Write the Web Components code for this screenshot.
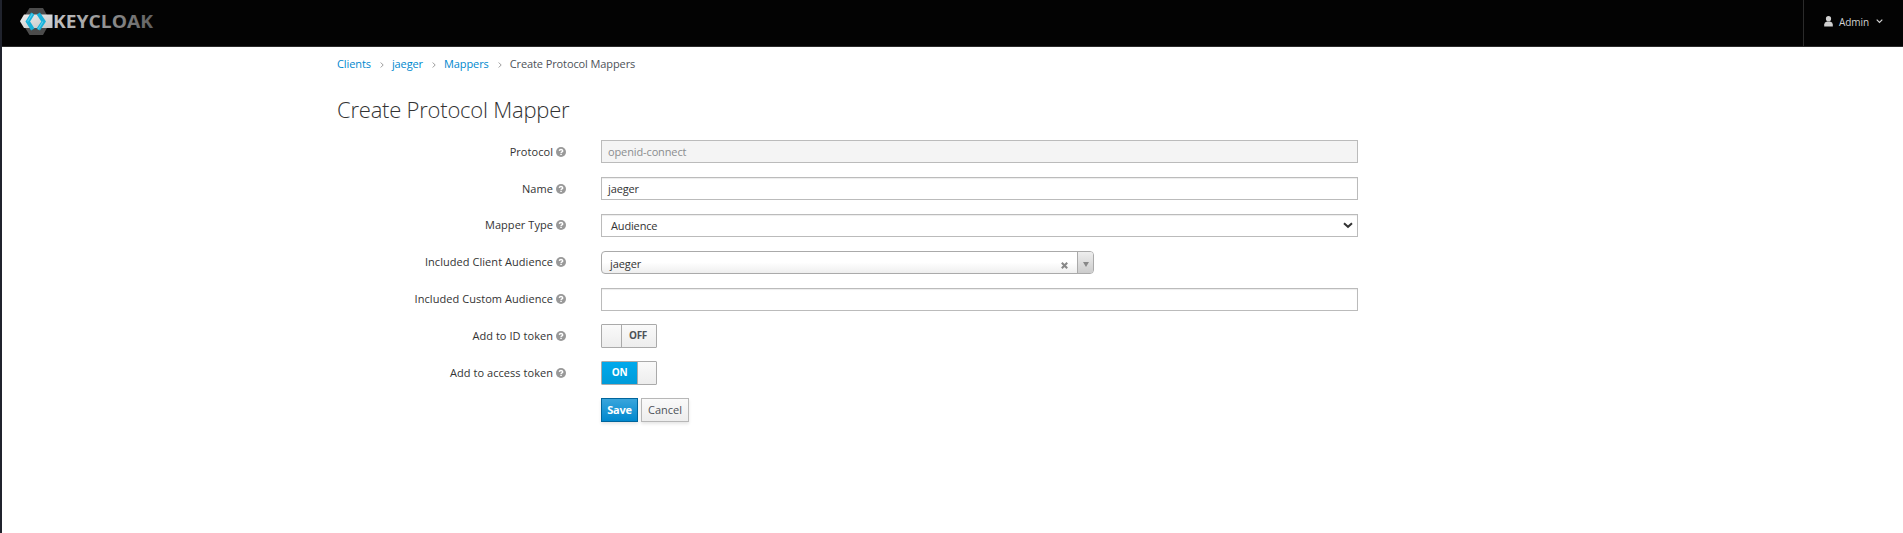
<!DOCTYPE html>
<html lang="en"><head><meta charset="utf-8"><title>Create Protocol Mapper</title>
<style>
html,body{margin:0;height:100%;overflow:hidden}
body{font:12px/20px "Open Sans",sans-serif;color:#333;background:#fff}
</style></head><body>
<kc-app>
  <kc-header slot="header" user="Admin"></kc-header>
  <kc-breadcrumb><a>Clients</a><a>jaeger</a><a>Mappers</a><span>Create Protocol Mappers</span></kc-breadcrumb>
  <kc-title>Create Protocol Mapper</kc-title>
  <kc-row label="Protocol"><kc-input disabled>openid-connect</kc-input></kc-row>
  <kc-row label="Name"><kc-input>jaeger</kc-input></kc-row>
  <kc-row raised label="Mapper Type"><kc-select>Audience</kc-select></kc-row>
  <kc-row raised label="Included Client Audience"><kc-combo>jaeger</kc-combo></kc-row>
  <kc-row raised label="Included Custom Audience"><kc-input></kc-input></kc-row>
  <kc-row raised label="Add to ID token"><kc-switch>OFF</kc-switch></kc-row>
  <kc-row raised label="Add to access token"><kc-switch on>ON</kc-switch></kc-row>
  <kc-row><kc-button primary>Save</kc-button><kc-button>Cancel</kc-button></kc-row>
</kc-app>
<script>
const define=(name,html)=>customElements.define(name,class extends HTMLElement{
  constructor(){super();const t=document.createElement('template');
    t.innerHTML=typeof html==='function'?html(this):html;
    this.attachShadow({mode:'open'}).append(t.content.cloneNode(true));}
});
define('kc-app',`<style>
:host{display:block;height:100%;box-sizing:border-box;border-left:2px solid #20232d;background:#fff}
main{box-sizing:border-box;padding:7px 0 0 335px;width:1356px}
</style><slot name="header"></slot><main><slot></slot></main>`);
define('kc-header',h=>`<style>
:host{display:flex;justify-content:space-between;height:47px;box-sizing:border-box;background:#030303;border-bottom:1px solid #2b2b2b}
.logo{display:block;margin:7px 0 0 17px}
.user{display:flex;align-items:center;box-sizing:border-box;width:100px;padding:0 0 3px 20px;border-left:1px solid #2b2b2b;color:#d1d1d1;font-size:10px;line-height:12px}
.name{margin-left:6px;letter-spacing:-.05px}
.chev{margin-left:7px}
</style>
<svg class="logo" width="140" height="30" viewBox="0 0 140 30">
<defs><linearGradient id="g" x1="0" x2="1"><stop offset="0" stop-color="#c4c4c4"/><stop offset=".35" stop-color="#a4a4a4"/><stop offset="1" stop-color="#606060"/></linearGradient>
<linearGradient id="h" x1="0" x2="1" y2="1"><stop offset="0" stop-color="#eee"/><stop offset="1" stop-color="#c3c3c3"/></linearGradient></defs>
<path d="M10.500 1h13.500l4.800 8.500v10l-4.800 8.500H10.500L5.300 19.500v-10z" fill="#4c4c4c"/>
<path d="M5 7.500h28.500v13.500H5l-4-6.700z" fill="url(#h)"/>
<path d="M13.800 6.500l-5 8 5 8M19.300 6.500l5.300 8-5.300 8" fill="none" stroke="#18b0d8" stroke-width="4"/>
<path d="M13.500 6.500l-5 8M19 22.500l5-8" fill="none" stroke="#55cdec" stroke-width="1.200"/>
<text x="34" y="20.500" textLength="100" lengthAdjust="spacingAndGlyphs" font-family="Open Sans,sans-serif" font-weight="700" font-size="18.500" fill="url(#g)">KEYCLOAK</text></svg>
<div class="user"><svg width="9" height="11" viewBox="0 0 9 11" fill="#d1d1d1"><circle cx="4.500" cy="2.700" r="2.600"/><path d="M.2 10.500V8.500Q.3 6 3 5.500h3Q8.700 6 8.800 8.500v2z"/></svg>
<span class="name">${h.getAttribute('user')}</span><svg class="chev" width="7" height="5" viewBox="0 0 7 5"><path d="M.7.700l2.800 2.800L6.300.700" fill="none" stroke="#d1d1d1" stroke-width="1.200"/></svg></div>`);
define('kc-breadcrumb',`<style>
:host{display:flex;height:20px;font-size:11px;letter-spacing:-.1px;line-height:20px;color:#4d5258}
::slotted(a){color:#0088ce}
svg{margin:8px 8px 0 9px}
</style>`);
document.querySelectorAll('kc-breadcrumb').forEach(b=>{
  [...b.children].forEach((c,i)=>{c.slot='c'+i;
    if(i)b.shadowRoot.append(Object.assign(document.createElement('template'),{innerHTML:'<svg width="4" height="6" viewBox="0 0 4 6"><path d="M.7.500L3.200 3 .7 5.500" fill="none" stroke="#9c9c9c"/></svg>'}).content);
    b.shadowRoot.append(Object.assign(document.createElement('slot'),{name:'c'+i}));});
});
define('kc-title',`<style>:host{display:block;margin:19px 0 10px;height:37px;font-size:22px;letter-spacing:-.22px;font-weight:300;line-height:32px;color:#333;white-space:nowrap}</style><slot></slot>`);
define('kc-row',h=>`<style>
:host{display:grid;grid-template-columns:229px 757px;column-gap:35px;height:37px}
label{display:flex;justify-content:flex-end;height:23px;font-size:11px;letter-spacing:.05px;line-height:23px;white-space:nowrap}
:host([raised]) label{margin-top:-1px}
svg{margin:7px 0 0 3px}
.c{display:flex;align-items:flex-start}
</style><label>${h.hasAttribute('label')?`<span>${h.getAttribute('label')}</span><svg width="10" height="10" viewBox="0 0 10 10"><circle cx="5" cy="5" r="5" fill="#999"/><path d="M3.300 3.800Q3.500 2.500 5 2.500T6.700 3.900Q6.700 4.500 5.900 4.900T5.100 6" fill="none" stroke="#fff" stroke-width="1.400"/><path d="M4.300 6.700h1.500v1.400H4.300z" fill="#fff"/></svg>`:''}</label><div class="c"><slot></slot></div>`);
const box='display:block;box-sizing:border-box;height:23px;border:1px solid #bbb;font-size:11px;';
define('kc-input',`<style>:host{${box}width:757px;padding-left:6px;letter-spacing:-.12px;line-height:21px;background:#fff;box-shadow:inset 0 1px 1px rgba(3,3,3,.075)}
:host([disabled]){background:#f4f4f4;color:#8b8d8f;box-shadow:none}</style><slot></slot>`);
define('kc-select',`<style>:host{${box}display:flex;justify-content:space-between;width:757px;padding:0 4px 0 9px;letter-spacing:-.15px;line-height:22px;box-shadow:inset 0 1px 1px rgba(3,3,3,.075)}svg{margin-top:7px}</style><span><slot></slot></span><svg width="10" height="7" viewBox="0 0 10 7"><path d="M1 1.200l4 3.600 4-3.600" fill="none" stroke="#333" stroke-width="2"/></svg>`);
define('kc-combo',`<style>:host{${box}display:flex;width:493px;padding-left:8px;border-color:#aaa;border-radius:4px;letter-spacing:-.1px;line-height:24px;background:linear-gradient(#fff 50%,#eee);overflow:hidden}
.x{margin:10px 9px 0 auto}.a{width:15px;border-left:1px solid #aaa;background:linear-gradient(#eee,#ccc);display:flex;justify-content:center;align-items:center}.a svg{margin-top:3px}</style><slot></slot>
<svg class="x" width="7" height="7" viewBox="0 0 7 7"><path d="M.8.800l5.400 5.400M6.200.800L.8 6.200" stroke="#888" stroke-width="2.100"/></svg><span class="a"><svg width="6" height="5" viewBox="0 0 6 5"><path d="M0 0h6L3 5z" fill="#888"/></svg></span>`);
define('kc-switch',`<style>:host{display:flex;box-sizing:border-box;width:56px;height:24px;margin-top:-1px;border:1px solid #aaa;border-radius:1px;font-size:10px;font-weight:700;line-height:21px;color:#4d5258;background:linear-gradient(#fafafa,#ededed)}
.k{width:19px;border-right:1px solid #aaa}.t{flex:1;text-align:center;letter-spacing:-.3px;padding-right:2px}
:host([on]){flex-direction:row-reverse;color:#fff}:host([on]) .t{padding:0;background:linear-gradient(#00a9ec,#009bd9)}
:host([on]) .k{border:0;border-left:1px solid #aaa;width:18px}</style><span class="k"></span><span class="t"><slot></slot></span>`);
define('kc-button',`<style>:host{display:block;box-sizing:border-box;width:48px;height:24px;margin:-1px 3px 0 0;border:1px solid #b7b7b7;font-size:11px;line-height:22px;text-align:center;color:#4d5258;background:linear-gradient(#fafafa,#ededed);box-shadow:0 2px 3px rgba(3,3,3,.1)}
:host([primary]){width:37px;border-color:#00659c;color:#fff;font-weight:700;letter-spacing:-.2px;background:linear-gradient(#39a5dc,#0088ce)}</style><slot></slot>`);
</script></body></html>
